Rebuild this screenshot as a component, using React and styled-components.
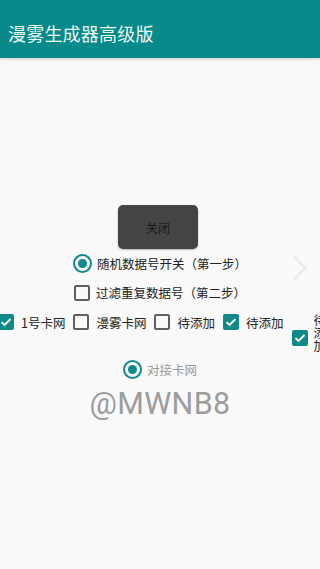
import React from 'react';
import styled, { createGlobalStyle } from 'styled-components';

const GlobalStyle = createGlobalStyle`
  html, body {
    margin: 0;
    padding: 0;
    background: #f9f9f9;
    font-family: "Noto Sans CJK SC", "Noto Sans", Roboto, sans-serif;
  }
  * { box-sizing: border-box; }
`;

const Screen = styled.div`
  position: relative;
  width: 320px;
  height: 569px;
  overflow: hidden;
  background: #f9f9f9;
`;

const AppBar = styled.header`
  height: 58px;
  background: #088a8a;
  display: flex;
  align-items: center;
  padding: 8px 0 0 8px;
  box-shadow: 0 1px 3px rgba(0, 0, 0, 0.18);
`;

const Title = styled.h1`
  margin: 0;
  font-size: 18px;
  font-weight: 400;
  color: #eef8f7;
  letter-spacing: 0.2px;
`;

const Content = styled.main`
  display: flex;
  flex-direction: column;
  align-items: center;
  padding-top: 147px;
`;

const CloseButton = styled.button`
  width: 80px;
  height: 44px;
  border: none;
  border-radius: 5px;
  background: #444444;
  color: #1a1a1a;
  font-family: inherit;
  font-size: 12px;
  margin: 0 4px 0 0;
  box-shadow: 0 1px 2px rgba(0, 0, 0, 0.25);
`;

const Option = styled.label`
  display: flex;
  align-items: center;
  gap: ${p => p.$gap || 5}px;
  height: ${p => p.$h || 29}px;
  margin-top: ${p => p.$top || 0}px;
  font-size: 12.5px;
  color: ${p => (p.$muted ? '#9a9a9a' : '#222222')};
  white-space: nowrap;
`;

const RadioRing = styled.span`
  width: 19px;
  height: 19px;
  border-radius: 50%;
  border: 2px solid #0f8a89;
  display: flex;
  align-items: center;
  justify-content: center;
  &::after {
    content: '';
    width: 9px;
    height: 9px;
    border-radius: 50%;
    background: #0f8a89;
  }
`;

const Box = styled.span`
  flex: none;
  width: 16px;
  height: 16px;
  margin-top: ${p => p.$top || 0}px;
  border-radius: 2px;
  border: ${p => (p.$checked ? 'none' : '2px solid #606060')};
  background: ${p => (p.$checked ? '#0f8a89' : 'transparent')};
  display: flex;
  align-items: center;
  justify-content: center;
`;

const CheckRow = styled.div`
  align-self: flex-start;
  display: flex;
  align-items: flex-start;
  gap: 8px;
  margin-left: -2px;
  margin-top: 6px;
  width: 340px;
`;

const RowItem = styled.label`
  display: flex;
  align-items: center;
  gap: 7px;
  height: 18px;
  font-size: 12.5px;
  color: #222222;
  white-space: nowrap;
`;

const TallItem = styled.label`
  display: flex;
  align-items: flex-start;
  gap: 6px;
  font-size: 12.5px;
  line-height: 13px;
  color: #222222;
`;

const NarrowText = styled.span`
  width: 13px;
  white-space: normal;
  word-break: break-all;
  height: 40px;
  overflow: hidden;
`;

const Watermark = styled.div`
  margin-top: 2px;
  font-family: Roboto, "Noto Sans", sans-serif;
  font-size: 30.5px;
  color: #9d9d9d;
  letter-spacing: 0.3px;
`;

const Chevron = styled.svg`
  position: absolute;
  right: 12px;
  top: 254px;
`;

const Check = () => (
  <svg width="12" height="10" viewBox="0 0 12 10">
    <path d="M1.5 5.2 L4.5 8 L10.5 2" fill="none" stroke="#fff" strokeWidth="1.8" />
  </svg>
);

const CheckBox = ({ checked, top }) => (
  <Box $checked={checked} $top={top}>
    {checked && <Check />}
  </Box>
);

export default function App() {
  return (
    <Screen>
      <GlobalStyle />
      <AppBar>
        <Title>漫雾生成器高级版</Title>
      </AppBar>
      <Content>
        <CloseButton>关闭</CloseButton>
        <Option>
          <RadioRing />
          随机数据号开关（第一步）
        </Option>
        <Option $gap={6}>
          <CheckBox />
          过滤重复数据号（第二步）
        </Option>
        <CheckRow>
          <RowItem>
            <CheckBox checked />
            1号卡网
          </RowItem>
          <RowItem>
            <CheckBox />
            漫雾卡网
          </RowItem>
          <RowItem>
            <CheckBox />
            待添加
          </RowItem>
          <RowItem>
            <CheckBox checked />
            待添加
          </RowItem>
          <TallItem>
            <CheckBox checked top={17} />
            <NarrowText>待添加</NarrowText>
          </TallItem>
        </CheckRow>
        <Option $muted $h={30} $top={1}>
          <RadioRing />
          对接卡网
        </Option>
        <Watermark>@MWNB8</Watermark>
      </Content>
      <Chevron width="16" height="28" viewBox="0 0 16 28">
        <path d="M3 3 L13 14 L3 25" fill="none" stroke="#eaeaea" strokeWidth="2.5" />
      </Chevron>
    </Screen>
  );
}
